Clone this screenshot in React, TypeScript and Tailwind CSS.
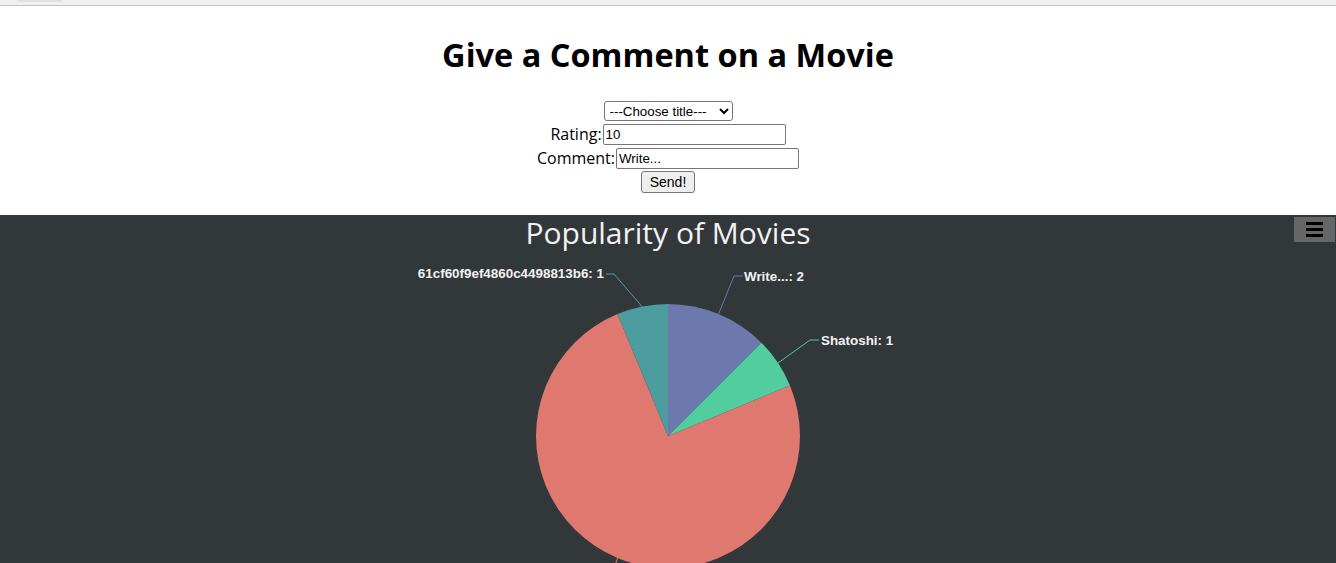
export default function App() {
  const cx = 668;
  const cy = 185;
  const r = 132;

  return (
    <div className="w-[1336px] h-[563px] overflow-hidden bg-white">
      {/* browser strip */}
      <div className="h-[6px] bg-[#f0f0f0] border-b border-[#c4c4c4] flex">
        <div className="ml-[17px] w-[45px] h-[2px] rounded-b bg-[#e0e0e0]" />
      </div>

      {/* form */}
      <div className="h-[209px] flex flex-col items-center text-black" style={{ fontFamily: '"Open Sans", "Noto Sans", sans-serif' }}>
        <h1 className="mt-[27px] h-[44px] leading-[44px] text-[32.5px] font-bold">Give a Comment on a Movie</h1>
        <div className="mt-[23px] flex flex-col items-center text-[16px]">
          <div className="h-[22px] flex items-center">
            <select
              className="h-[20px] w-[129px] border border-[#767676] rounded-[3px] bg-white text-[13.33px] pl-[1px]"
              style={{ fontFamily: '"Liberation Sans", Arial, sans-serif' }}
              defaultValue=""
            >
              <option value="">---Choose title---</option>
            </select>
          </div>
          <div className="h-[24px] flex items-center">
            <span>Rating:</span>
            <input
              className="ml-[1px] h-[21px] w-[183px] border border-[#767676] rounded-[2px] px-[2px] text-[13.33px]"
              style={{ fontFamily: '"Liberation Sans", Arial, sans-serif' }}
              defaultValue="10"
            />
          </div>
          <div className="h-[24px] flex items-center">
            <span>Comment:</span>
            <input
              className="ml-[1px] h-[21px] w-[183px] border border-[#767676] rounded-[2px] px-[2px] text-[13.33px]"
              style={{ fontFamily: '"Liberation Sans", Arial, sans-serif' }}
              defaultValue="Write..."
            />
          </div>
          <div className="h-[24px] flex items-center">
            <button
              className="h-[22px] w-[54px] border border-[#767676] rounded-[3px] bg-[#efefef] text-[14px]"
              style={{ fontFamily: '"Liberation Sans", Arial, sans-serif' }}
            >
              Send!
            </button>
          </div>
        </div>
      </div>

      {/* chart */}
      <div className="relative h-[348px] bg-[#32373a]">
        <div
          className="h-[36px] leading-[36px] text-center text-[30px] text-[#f2f2f2]"
          style={{ fontFamily: '"Open Sans", "Noto Sans", sans-serif' }}
        >
          Popularity of Movies
        </div>
        <svg width="1336" height="312" viewBox="0 0 1336 312" className="block">
          <path d={`M${cx},${cy} L668,53 A${r},${r} 0 0 1 761.34,91.66 Z`} fill="#6d78ad" />
          <path d={`M${cx},${cy} L761.34,91.66 A${r},${r} 0 0 1 789.95,134.49 Z`} fill="#51cda0" />
          <path d={`M${cx},${cy} L789.95,134.49 A${r},${r} 0 1 1 617.49,63.05 Z`} fill="#df7970" />
          <path d={`M${cx},${cy} L617.49,63.05 A${r},${r} 0 0 1 668,53 Z`} fill="#4c9ca0" />

          {/* label lines */}
          <polyline points="718.5,63 734,25 743,25" fill="none" stroke="#6d78ad" strokeWidth="1" />
          <polyline points="778,112 810,89 819,89" fill="none" stroke="#51cda0" strokeWidth="1" />
          <polyline points="642,55.5 614,23 606,23" fill="none" stroke="#4c9ca0" strokeWidth="1" />
          <polyline points="617.5,307 612,324" fill="none" stroke="#df7970" strokeWidth="1" />

          <g fill="#f2f2f2" fontSize="13.4" fontWeight="bold" fontFamily='"Liberation Sans", Arial, sans-serif'>
            <text x={744} y={30}>Write...: 2</text>
            <text x={821} y={94}>Shatoshi: 1</text>
            <text x={604} y={27} textAnchor="end">61cf60f9ef4860c4498813b6: 1</text>
          </g>
        </svg>

        <button className="absolute top-[2px] right-[1px] w-[41px] h-[25px] bg-[#666666] flex flex-col items-center justify-center gap-[3px]">
          <span className="block w-[17px] h-[3px] bg-black" />
          <span className="block w-[17px] h-[3px] bg-black" />
          <span className="block w-[17px] h-[3px] bg-black" />
        </button>
      </div>
    </div>
  );
}
